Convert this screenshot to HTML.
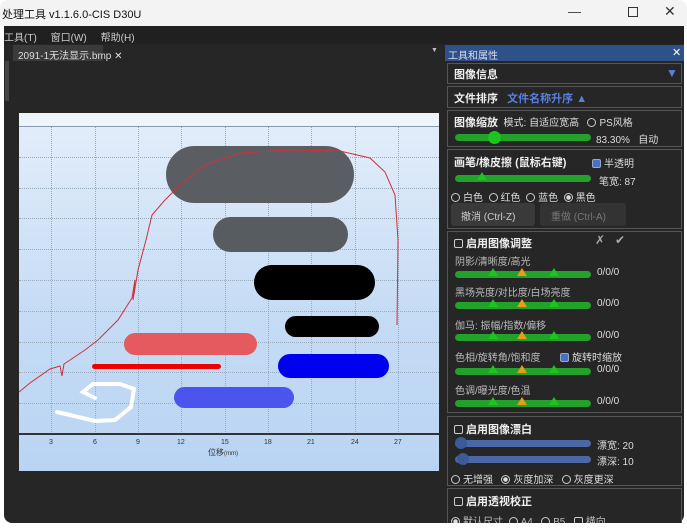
<!DOCTYPE html><html><head><meta charset="utf-8"><style>
*{margin:0;padding:0;box-sizing:border-box}
body{width:687px;height:529px;background:#fff;position:relative;overflow:hidden;font-family:"Liberation Sans","Noto Sans CJK SC",sans-serif;font-size:10px;color:#ddd}
.a{position:absolute}
.win{left:4px;top:0;width:680px;height:523px;background:#262626;border-radius:8px;overflow:hidden}
.sec{position:absolute;left:447px;width:235px;border:1px solid #555;background:#262626}
.t{position:absolute;white-space:nowrap}
.g{position:absolute;height:7px;background:#22a22a;border-radius:4px}
.b{position:absolute;height:7px;background:#4a68a8;border-radius:4px}
.tri{position:absolute;width:0;height:0;border-left:5px solid transparent;border-right:5px solid transparent;border-bottom:8px solid #1ec41e}
.tro{border-bottom-color:#e89a1a}
.cb{display:inline-block;width:9px;height:9px;border:1px solid #ccc;border-radius:2px;vertical-align:-1px;margin-right:3px}
.cbc{background:#4a6fc9;border-color:#9ab}
.rd{display:inline-block;width:9px;height:9px;border:1px solid #ccc;border-radius:50%;vertical-align:-1px;margin-right:3px}
.rdc{background:radial-gradient(#ddd 2px,transparent 2.5px)}
.h{font-size:11px;font-weight:bold;color:#eee}
.gv{position:absolute;top:127px;height:307px;border-left:1px dotted #9ab}
.gh{position:absolute;left:19px;width:420px;border-top:1px dotted #9ab}
.pill{position:absolute;border-radius:20px}
</style></head><body>
<div class="a" style="left:0;top:0;width:687px;height:26px;background:#f3f3f3;border-radius:8px 8px 0 0"></div>
<div class="t" style="left:2px;top:6px;color:#111;font-size:11px">处理工具 v1.1.6.0-CIS D30U</div>
<div class="t" style="left:568px;top:4px;color:#333;font-size:13px">—</div>
<div class="a" style="left:628px;top:7px;width:10px;height:10px;border:1px solid #333"></div>
<div class="t" style="left:664px;top:3px;color:#333;font-size:14px">✕</div>
<div class="a win" style="top:26px;height:497px;border-radius:0 0 8px 8px">
</div>
<div class="a" style="left:4px;top:26px;width:680px;height:18px;background:#202020"></div>
<div class="t" style="left:4px;top:29px;font-size:10px;color:#ccc">工具(T)&nbsp;&nbsp;&nbsp;&nbsp;&nbsp;窗口(W)&nbsp;&nbsp;&nbsp;&nbsp;&nbsp;帮助(H)</div>
<div class="a" style="left:4px;top:44px;width:440px;height:17px;background:#262626"></div>
<div class="a" style="left:13px;top:45px;width:90px;height:16px;background:#3a3a3a"></div>
<div class="t" style="left:18px;top:47px;color:#ddd">2091-1无法显示.bmp ✕</div>
<div class="t" style="left:431px;top:47px;font-size:7px;color:#bbb">▼</div>
<div class="a" style="left:5px;top:61px;width:4px;height:40px;background:#444"></div>
<!-- image -->
<div class="a" style="left:19px;top:113px;width:420px;height:358px;background:linear-gradient(#e4eefa,#c6dcf5 55%,#b9d4f3)"></div>
<div class="a" style="left:19px;top:113px;width:420px;height:14px;background:#eef4fc;border-bottom:1px solid #8898aa"></div>
<div class="gv" style="left:51px"></div><div class="gv" style="left:95px"></div><div class="gv" style="left:138px"></div><div class="gv" style="left:181px"></div><div class="gv" style="left:225px"></div><div class="gv" style="left:268px"></div><div class="gv" style="left:311px"></div><div class="gv" style="left:355px"></div><div class="gv" style="left:398px"></div>
<div class="gh" style="top:157px"></div><div class="gh" style="top:188px"></div><div class="gh" style="top:218px"></div><div class="gh" style="top:249px"></div><div class="gh" style="top:280px"></div><div class="gh" style="top:311px"></div><div class="gh" style="top:342px"></div><div class="gh" style="top:372px"></div><div class="gh" style="top:403px"></div>
<div class="a" style="left:19px;top:433px;width:420px;height:2px;background:#333"></div>
<div class="t" style="left:19px;top:439px;width:420px;font-size:7px;color:#333">
<span class="a" style="left:30px">3</span><span class="a" style="left:74px">6</span><span class="a" style="left:117px">9</span><span class="a" style="left:158px">12</span><span class="a" style="left:202px">15</span><span class="a" style="left:245px">18</span><span class="a" style="left:288px">21</span><span class="a" style="left:332px">24</span><span class="a" style="left:375px">27</span></div>
<div class="t" style="left:208px;top:447px;font-size:8px;color:#333">位移<span style="font-size:6px">(mm)</span></div>
<div class="pill" style="left:166px;top:146px;width:188px;height:57px;background:#5a5e62;border-radius:29px"></div>
<div class="pill" style="left:213px;top:217px;width:135px;height:35px;background:#575c61;border-radius:18px"></div>
<div class="pill" style="left:254px;top:265px;width:121px;height:35px;background:#000;border-radius:18px"></div>
<div class="pill" style="left:285px;top:316px;width:94px;height:21px;background:#000"></div>
<div class="pill" style="left:124px;top:333px;width:133px;height:22px;background:#e45a5e"></div>
<div class="pill" style="left:278px;top:354px;width:111px;height:24px;background:#0000f0"></div>
<div class="a" style="left:92px;top:364px;width:129px;height:5px;background:#e00;border-radius:3px"></div>
<div class="pill" style="left:174px;top:387px;width:120px;height:21px;background:#4a55ee"></div>
<svg class="a" style="left:0;top:0" width="687" height="529"><path d="M19 392 L30 383 L50 369 L60 366 L62 376 L64 364 L85 350 L98 340 L118 320 L132 298 L135 280 L133 300 L138 270 L146 240 L152 215 L165 200 L180 185 L205 165 L240 153 L290 150 L340 151 L370 158 L385 172 L395 195 L398 240 L397 325" fill="none" stroke="#d0303a" stroke-width="1"/><path d="M57 412 L95 421 L115 420 L131 407 L134 389 L120 384 L93 384 L83 392 L95 398" fill="none" stroke="#fff" stroke-width="4" stroke-linecap="round"/></svg>
<!-- right panel -->
<div class="a" style="left:445px;top:45px;width:239px;height:16px;background:#2e5189"></div>
<div class="t" style="left:448px;top:47px;color:#dde">工具和属性</div>
<div class="t" style="left:672px;top:46px;color:#fff;font-size:11px">✕</div>
<div class="sec" style="top:63px;height:21px"></div>
<div class="t h" style="left:454px;top:66px">图像信息</div>
<div class="t" style="left:666px;top:66px;color:#5a7fe0;font-size:12px">▼</div>
<div class="sec" style="top:86px;height:22px"></div>
<div class="t h" style="left:454px;top:90px">文件排序&nbsp;&nbsp;&nbsp;<span style="color:#5a7fe0">文件名称升序 ▲</span></div>
<div class="sec" style="top:110px;height:37px"></div>
<div class="t" style="left:454px;top:114px"><span class="h">图像缩放</span>&nbsp;&nbsp;模式: 自适应宽高&nbsp;&nbsp;&nbsp;<span class="cb" style="border-radius:50%"></span>PS风格</div>
<div class="g" style="left:455px;top:134px;width:136px"></div>
<div class="a" style="left:488px;top:131px;width:13px;height:13px;border-radius:50%;background:#1ec41e"></div>
<div class="t" style="left:596px;top:131px">83.30%&nbsp;&nbsp;&nbsp;自动</div>
<div class="sec" style="top:149px;height:80px"></div>
<div class="t" style="left:454px;top:154px"><span class="h">画笔/橡皮擦 (鼠标右键)</span></div>
<div class="t" style="left:592px;top:155px"><span class="cb cbc"></span>半透明</div>
<div class="g" style="left:455px;top:175px;width:136px"></div>
<div class="tri" style="left:477px;top:172px"></div>
<div class="t" style="left:599px;top:173px">笔宽: 87</div>
<div class="t" style="left:451px;top:189px"><span class="rd"></span>白色&nbsp;&nbsp;<span class="rd"></span>红色&nbsp;&nbsp;<span class="rd"></span>蓝色&nbsp;&nbsp;<span class="rd rdc"></span>黑色</div>
<div class="a" style="left:451px;top:203px;width:84px;height:23px;background:#3a3a3a;border-radius:3px"></div>
<div class="t" style="left:461px;top:208px;color:#ccc">撤消 (Ctrl-Z)</div>
<div class="a" style="left:540px;top:203px;width:86px;height:23px;background:#333;border-radius:3px"></div>
<div class="t" style="left:551px;top:208px;color:#777">重做 (Ctrl-A)</div>
<div class="sec" style="top:231px;height:182px"></div>
<div class="t h" style="left:454px;top:235px"><span class="cb"></span>启用图像调整</div>
<div class="t" style="left:595px;top:233px;color:#aaa;font-size:12px">✗&nbsp;&nbsp;&nbsp;✔</div>
<div class="t" style="left:455px;top:253px;color:#bbb">阴影/清晰度/高光</div>
<div class="t" style="left:455px;top:284px;color:#bbb">黑场亮度/对比度/白场亮度</div>
<div class="t" style="left:455px;top:317px;color:#bbb">伽马: 振幅/指数/偏移</div>
<div class="t" style="left:455px;top:349px;color:#bbb">色相/旋转角/饱和度</div>
<div class="t" style="left:560px;top:349px"><span class="cb cbc"></span>旋转时缩放</div>
<div class="t" style="left:455px;top:382px;color:#bbb">色调/曝光度/色温</div>
<div class="g" style="left:455px;top:271px;width:136px"></div><div class="tri" style="left:488px;top:268px"></div><div class="tri tro" style="left:517px;top:268px"></div><div class="tri" style="left:549px;top:268px"></div><div class="t" style="left:597px;top:267px">0/0/0</div>
<div class="g" style="left:455px;top:302px;width:136px"></div><div class="tri" style="left:488px;top:299px"></div><div class="tri tro" style="left:517px;top:299px"></div><div class="tri" style="left:549px;top:299px"></div><div class="t" style="left:597px;top:298px">0/0/0</div>
<div class="g" style="left:455px;top:334px;width:136px"></div><div class="tri" style="left:488px;top:331px"></div><div class="tri tro" style="left:517px;top:331px"></div><div class="tri" style="left:549px;top:331px"></div><div class="t" style="left:597px;top:330px">0/0/0</div>
<div class="g" style="left:455px;top:368px;width:136px"></div><div class="tri" style="left:488px;top:365px"></div><div class="tri tro" style="left:517px;top:365px"></div><div class="tri" style="left:549px;top:365px"></div><div class="t" style="left:597px;top:364px">0/0/0</div>
<div class="g" style="left:455px;top:400px;width:136px"></div><div class="tri" style="left:488px;top:397px"></div><div class="tri tro" style="left:517px;top:397px"></div><div class="tri" style="left:549px;top:397px"></div><div class="t" style="left:597px;top:396px">0/0/0</div>
<div class="sec" style="top:416px;height:70px"></div>
<div class="t h" style="left:454px;top:421px"><span class="cb"></span>启用图像漂白</div>
<div class="b" style="left:455px;top:440px;width:136px"></div><div class="a" style="left:455px;top:437px;width:12px;height:12px;border-radius:50%;background:#3a5a98"></div>
<div class="t" style="left:597px;top:437px">漂宽: 20</div>
<div class="b" style="left:455px;top:456px;width:136px"></div><div class="a" style="left:457px;top:453px;width:12px;height:12px;border-radius:50%;background:#3a5a98"></div>
<div class="t" style="left:597px;top:453px">漂深: 10</div>
<div class="t" style="left:451px;top:471px"><span class="rd"></span>无增强&nbsp;&nbsp;&nbsp;<span class="rd rdc"></span>灰度加深&nbsp;&nbsp;&nbsp;<span class="rd"></span>灰度更深</div>
<div class="sec" style="top:488px;height:36px;border-bottom:none"></div>
<div class="t h" style="left:454px;top:493px"><span class="cb"></span>启用透视校正</div>
<div class="t" style="left:451px;top:513px;color:#bbb"><span class="rd rdc"></span>默认尺寸&nbsp;&nbsp;<span class="rd"></span>A4&nbsp;&nbsp;&nbsp;<span class="rd"></span>B5&nbsp;&nbsp;&nbsp;<span class="cb"></span>横向</div>
<div class="a" style="left:0;top:523px;width:687px;height:6px;background:#fff"></div>
</body></html>
